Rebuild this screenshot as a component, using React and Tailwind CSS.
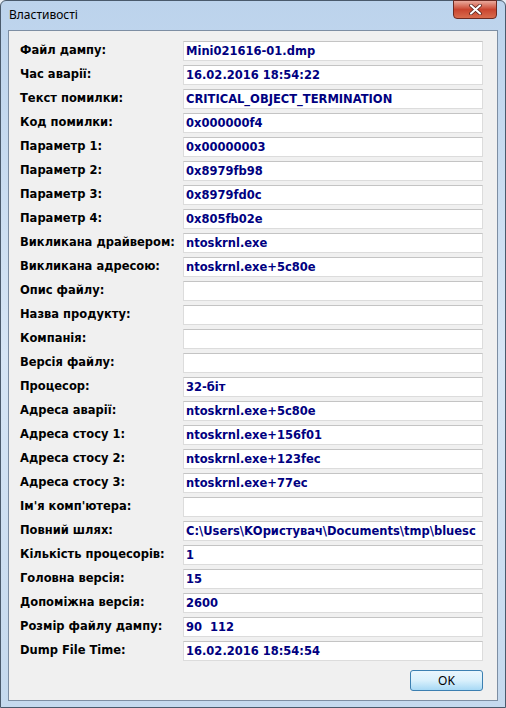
// App.jsx
const rows = [
  ["Файл дампу:", "Mini021616-01.dmp"],
  ["Час аварії:", "16.02.2016 18:54:22"],
  ["Текст помилки:", "CRITICAL_OBJECT_TERMINATION"],
  ["Код помилки:", "0x000000f4"],
  ["Параметр 1:", "0x00000003"],
  ["Параметр 2:", "0x8979fb98"],
  ["Параметр 3:", "0x8979fd0c"],
  ["Параметр 4:", "0x805fb02e"],
  ["Викликана драйвером:", "ntoskrnl.exe"],
  ["Викликана адресою:", "ntoskrnl.exe+5c80e"],
  ["Опис файлу:", ""],
  ["Назва продукту:", ""],
  ["Компанія:", ""],
  ["Версія файлу:", ""],
  ["Процесор:", "32-біт"],
  ["Адреса аварії:", "ntoskrnl.exe+5c80e"],
  ["Адреса стосу 1:", "ntoskrnl.exe+156f01"],
  ["Адреса стосу 2:", "ntoskrnl.exe+123fec"],
  ["Адреса стосу 3:", "ntoskrnl.exe+77ec"],
  ["Ім'я комп'ютера:", ""],
  ["Повний шлях:", "C:\\Users\\KОристувач\\Documents\\tmp\\bluesc"],
  ["Кількість процесорів:", "1"],
  ["Головна версія:", "15"],
  ["Допоміжна версія:", "2600"],
  ["Розмір файлу дампу:", "90  112"],
  ["Dump File Time:", "16.02.2016 18:54:54"],
];

const Row = ({ label, value }) => (
  <div className="flex items-center h-[20px]">
    <div className="w-[163px] text-black whitespace-nowrap">{label}</div>
    <div className="w-[300px] h-[20px] bg-white border border-[#dcdcdc] border-t-[#c4c4c4] px-[2px] text-[#000080] overflow-hidden whitespace-pre leading-[18px]">
      {value}
    </div>
  </div>
);

export default function App() {
  return (
    <div className="w-[506px] h-[708px] bg-[#e8eef5]">
      <div className="w-[506px] h-[708px] flex flex-col rounded-t-[6px] border border-[#4a5a6c] bg-gradient-to-b from-[#bcd3ec] via-[#d6e5f5] to-[#c5d9ee]">
        {/* title bar */}
        <div className="h-[29px] flex items-start justify-between pl-[8px] pr-[8px]">
          <span className="mt-[5px] text-[12px] text-black font-['Noto_Sans',sans-serif]">Властивості</span>
          <div className="w-[44px] h-[19px] -mt-px rounded-b-[4px] border border-[#6b2a22] bg-gradient-to-b from-[#e9a99c] via-[#c9442f] to-[#d86b4d] flex items-center justify-center">
            <svg width="13" height="11" viewBox="0 0 13 11">
              <path d="M2 1.5 L11 9.5 M11 1.5 L2 9.5" stroke="#4a1a14" strokeWidth="3.6" strokeLinecap="round" />
              <path d="M2 1.5 L11 9.5 M11 1.5 L2 9.5" stroke="#ffffff" strokeWidth="2.2" strokeLinecap="round" />
            </svg>
          </div>
        </div>

        {/* content */}
        <div className="flex-1 mx-[7px] mb-[6px] border border-[#7d8ea3] bg-[#f0f0f0] pl-[11px] pt-[10px] font-['DejaVu_Sans',sans-serif] font-bold text-[11.5px]">
          <div className="flex flex-col gap-[4px]">
            {rows.map(([l, v]) => (
              <Row key={l} label={l} value={v} />
            ))}
          </div>
          <div className="flex justify-end w-[463px] mt-[9px]">
            <button className="w-[73px] h-[21px] rounded-[3px] border border-[#3c7fb1] bg-gradient-to-b from-[#eaf6fd] via-[#d9f0fc] to-[#a7d9f5] text-[12px] font-normal text-black font-['Noto_Sans',sans-serif] leading-none">
              OK
            </button>
          </div>
        </div>
      </div>
    </div>
  );
}
